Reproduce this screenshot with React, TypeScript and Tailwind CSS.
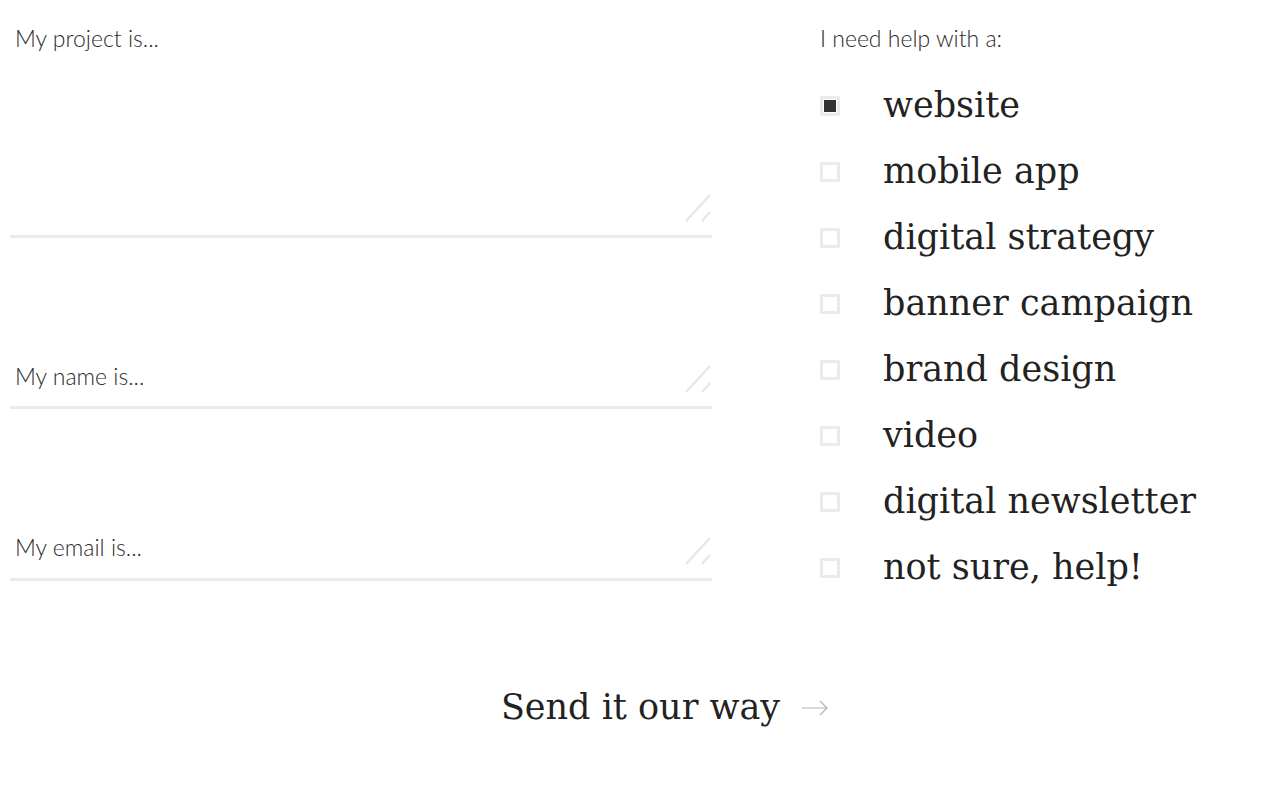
import { useState } from 'react';

const services = [
    'website',
    'mobile app',
    'digital strategy',
    'banner campaign',
    'brand design',
    'video',
    'digital newsletter',
    'not sure, help!',
];

const sans = "font-['Lato',sans-serif] font-light";
const serif = "font-['DejaVu_Serif','Liberation_Serif',serif]";

function Grip() {
    return (
        <svg
            className='absolute right-0 bottom-[13px] pointer-events-none'
            width='27'
            height='28'
            viewBox='0 0 27 28'
            fill='none'
            stroke='#e6e6e6'
            strokeWidth='2.2'
        >
            <path d='M1 27L25 1M17 27L25 18' />
        </svg>
    );
}

function Field({ label, rows, height }: { label: string; rows: number; height: string }) {
    return (
        <div className='relative border-b-[3px] border-[#ebebeb]'>
            <textarea
                rows={rows}
                placeholder={label}
                className={`block w-full ${height} mb-[12px] px-[5px] py-[2px] text-[23px] leading-[30px] text-[#2b2b2b] placeholder:text-[#2b2b2b] outline-none resize-none ${sans}`}
            />
            <Grip />
        </div>
    );
}

function App() {
    const [selected, setSelected] = useState<string[]>(['website']);

    const toggle = (name: string) =>
        setSelected(prev => (prev.includes(name) ? prev.filter(s => s !== name) : [...prev, name]));

    return (
        <div className='bg-white min-h-[809px] w-[1275px] pt-[21px]'>
            <div className='flex'>
                <div className='w-[702px] ml-[10px] flex flex-col'>
                    <Field label='My project is...' rows={6} height='h-[202px]' />
                    <div className='h-[121px]' />
                    <Field label='My name is...' rows={1} height='h-[35px]' />
                    <div className='h-[121px]' />
                    <Field label='My email is...' rows={1} height='h-[36px]' />
                </div>

                <div className='ml-[108px] flex flex-col'>
                    <p className={`text-[23px] leading-[34px] text-[#2b2b2b] ${sans}`}>I need help with a:</p>
                    <ul className='mt-[18px] flex flex-col'>
                        {services.map(s => {
                            const on = selected.includes(s);
                            return (
                                <li
                                    key={s}
                                    onClick={() => toggle(s)}
                                    className='flex items-center h-[66px] cursor-pointer'
                                >
                                    <span className='size-[20px] border-[3px] border-[#ebebeb] p-[1px] flex'>
                                        {on && <span className='size-full bg-[#333]' />}
                                    </span>
                                    <span className={`ml-[43px] -mt-[2px] text-[35px] leading-[66px] text-[#222] ${serif}`}>{s}</span>
                                </li>
                            );
                        })}
                    </ul>
                </div>
            </div>

            <div className='mt-[81px] flex justify-center'>
                <button type='button' className='relative cursor-pointer ml-[6px]'>
                    <span className={`text-[35px] leading-[50px] text-[#222] ${serif}`}>Send it our way</span>
                    <svg
                        className='absolute left-[calc(100%+22px)] top-[18px]'
                        width='26'
                        height='16'
                        viewBox='0 0 26 16'
                        fill='none'
                        stroke='#b3b3b3'
                        strokeWidth='1.2'
                    >
                        <path d='M0 8h25M18 1l7 7-7 7' />
                    </svg>
                </button>
            </div>
        </div>
    );
}

export default App;
